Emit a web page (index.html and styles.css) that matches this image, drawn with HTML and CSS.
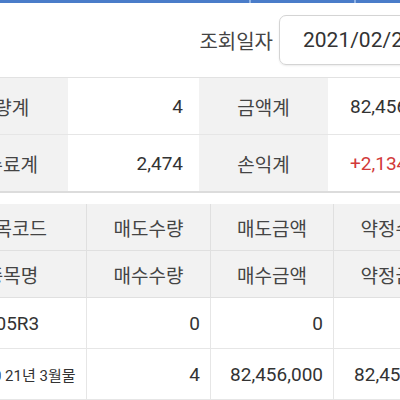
FILE: index.html
```html
<!DOCTYPE html>
<html lang="ko">
<head>
<meta charset="utf-8">
<link rel="stylesheet" href="styles.css">
</head>
<body>
<div class="page">
  <div class="tabs">
    <div class="tab"></div>
    <div class="tab"></div>
    <div class="tab"></div>
  </div>
  <div class="search">
    <span class="search-label">조회일자</span>
    <div class="date-box">2021/02/26</div>
  </div>
  <div class="summary">
    <div class="s-label">수량계</div>
    <div class="s-value">4</div>
    <div class="s-label">금액계</div>
    <div class="s-value">82,456,000</div>
    <div class="s-label">수수료계</div>
    <div class="s-value">2,474</div>
    <div class="s-label">손익계</div>
    <div class="s-value profit">+2,134,000</div>
  </div>
  <div class="grid">
    <div class="g-head">종목코드</div>
    <div class="g-head">매도수량</div>
    <div class="g-head">매도금액</div>
    <div class="g-head">약정수량</div>
    <div class="g-head">종목명</div>
    <div class="g-head">매수수량</div>
    <div class="g-head">매수금액</div>
    <div class="g-head">약정금액</div>
    <div class="g-cell center">105R3</div>
    <div class="g-cell">0</div>
    <div class="g-cell">0</div>
    <div class="g-cell"></div>
    <div class="g-cell center small">미니200 21년 3월물</div>
    <div class="g-cell">4</div>
    <div class="g-cell">82,456,000</div>
    <div class="g-cell">82,456,000</div>
  </div>
</div>
</body>
</html>
```
FILE: styles.css
```css
html, body {
  margin: 0;
  padding: 0;
  background: #ffffff;
  overflow: hidden;
}
body {
  font-family: "Roboto", "Noto Sans CJK KR", sans-serif;
  color: #333333;
}
.page {
  width: 520px;
  margin-left: -62px;
}
.tabs {
  display: flex;
  height: 3px;
  margin-left: 62px;
  background: #4a7cc9;
}
.tab {
  flex: 0 0 auto;
  box-sizing: border-box;
  width: 251px;
  border-right: 2px solid #8fb2e4;
}
.tab:nth-child(2) {
  width: 105px;
}
.tab:nth-child(3) {
  border-right: none;
  flex: 1 1 auto;
}
.search {
  display: flex;
  justify-content: flex-end;
  align-items: center;
  gap: 6px;
  padding: 12px 0 12px;
}
.search-label {
  font-size: 20px;
  color: #444;
}
.date-box {
  box-sizing: border-box;
  width: 179px;
  height: 50px;
  border: 1px solid #d4d4d4;
  border-radius: 7px;
  padding-left: 23px;
  display: flex;
  align-items: center;
  font-size: 21px;
  color: #333;
  box-shadow: 0 1px 2px rgba(0,0,0,0.08);
}
.summary {
  display: grid;
  grid-template-columns: 130px 131px 129px 130px;
  border-top: 1px solid #e2e2e2;
  border-bottom: 2px solid #dcdcdc;
}
.summary > div {
  height: 56px;
  display: flex;
  align-items: center;
  font-size: 19px;
}
.summary > div:nth-child(-n+4) {
  border-bottom: 1px solid #e6e6e6;
}
.s-label {
  background: #f2f2f2;
  justify-content: center;
  color: #444;
}
.s-value {
  justify-content: flex-end;
  padding-right: 16px;
}
.summary > .s-value:nth-child(4n) {
  justify-content: flex-start;
  padding-left: 22px;
  padding-right: 0;
}
.profit {
  color: #d23a3a;
}
.grid {
  margin-top: 11px;
  display: grid;
  grid-template-columns: 149px 124px 123px 124px;
}
.g-head {
  height: 46px;
  background: #f2f2f2;
  border-right: 1px solid #e0e0e0;
  border-bottom: 1px solid #e0e0e0;
  display: flex;
  align-items: center;
  justify-content: center;
  font-size: 19px;
  color: #444;
}
.g-cell {
  height: 50px;
  border-right: 1px solid #e6e6e6;
  border-bottom: 1px solid #e6e6e6;
  display: flex;
  align-items: center;
  justify-content: flex-end;
  padding-right: 10px;
  font-size: 19px;
  color: #333;
}
.g-cell.center {
  justify-content: center;
  padding-right: 0;
}
.g-cell.small {
  font-size: 15px;
}
```
